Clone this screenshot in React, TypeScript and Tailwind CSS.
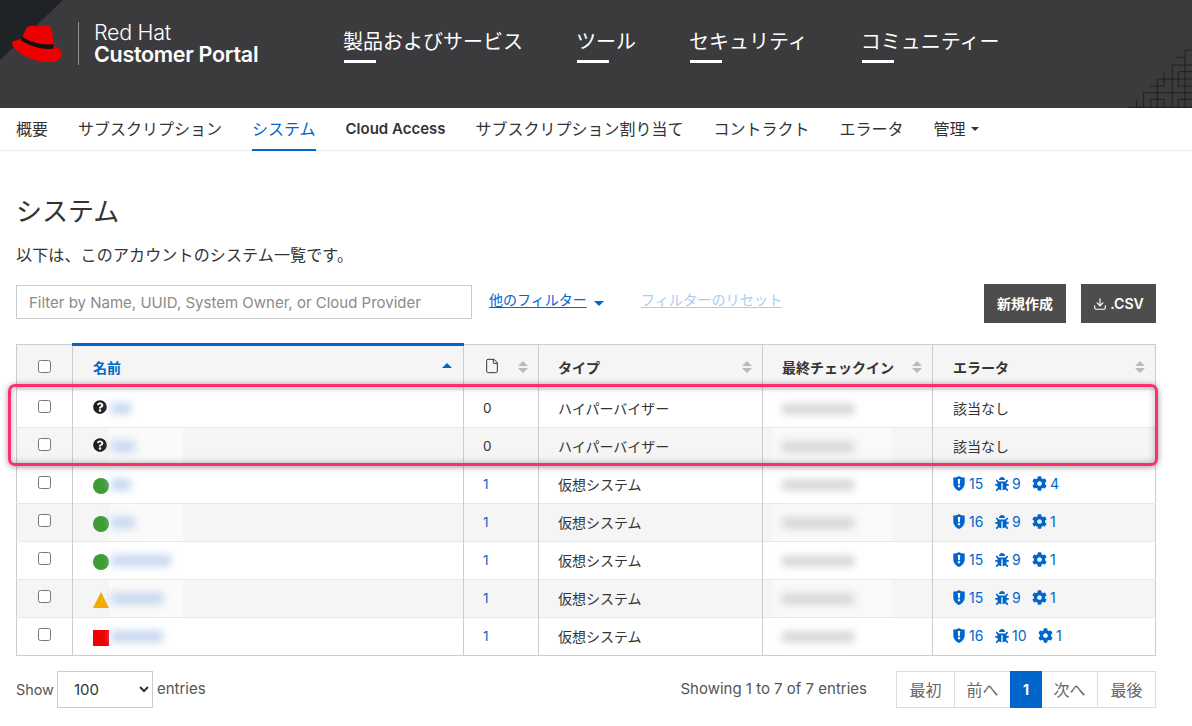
import React from 'react';
import { File, Download } from 'lucide-react';
import { FaBug, FaCog, FaQuestionCircle } from 'react-icons/fa';

const FONT = { fontFamily: '"Inter", "Noto Sans CJK JP", sans-serif' };

const primaryNav = ['製品およびサービス', 'ツール', 'セキュリティ', 'コミュニティー'];
const subNav = ['概要', 'サブスクリプション', 'システム', 'Cloud Access', 'サブスクリプション割り当て', 'コントラクト', 'エラータ'];

interface Row {
  status: 'unknown' | 'ok' | 'warn' | 'error';
  count: number;
  type: string;
  nameWidth: number;
  errata?: [number, number, number];
}

const rows: Row[] = [
  { status: 'unknown', count: 0, type: 'ハイパーバイザー', nameWidth: 20 },
  { status: 'unknown', count: 0, type: 'ハイパーバイザー', nameWidth: 24 },
  { status: 'ok', count: 1, type: '仮想システム', nameWidth: 20, errata: [15, 9, 4] },
  { status: 'ok', count: 1, type: '仮想システム', nameWidth: 24, errata: [16, 9, 1] },
  { status: 'ok', count: 1, type: '仮想システム', nameWidth: 60, errata: [15, 9, 1] },
  { status: 'warn', count: 1, type: '仮想システム', nameWidth: 52, errata: [15, 9, 1] },
  { status: 'error', count: 1, type: '仮想システム', nameWidth: 52, errata: [16, 10, 1] },
];

const SortIcon = () => (
  <svg width="10" height="13" viewBox="0 0 10 13" className="absolute right-[10px] top-1/2 -translate-y-1/2">
    <path d="M0 5.5 L5 0.5 L10 5.5 Z M0 7.5 L5 12.5 L10 7.5 Z" fill="#bbbbbb" />
  </svg>
);

const StatusIcon = ({ status }: { status: Row['status'] }) => {
  if (status === 'unknown') {
    return <FaQuestionCircle className="text-[14px] text-[#1f1f1f] -translate-y-[2px]" />;
  }
  if (status === 'ok') return <span className="block w-4 h-4 rounded-full bg-[#3f9c35] translate-y-[1px]" />;
  if (status === 'warn') {
    return (
      <svg width="16" height="16" viewBox="0 0 16 16" className="translate-y-[1px]">
        <path d="M8 0 L16 16 L0 16 Z" fill="#f0ab00" />
      </svg>
    );
  }
  return <span className="block w-4 h-4 bg-[#ee0000] translate-y-[1px]" />;
};

const ShieldIcon = () => (
  <svg width="12" height="15" viewBox="0 0 12 15">
    <path d="M0.3 1.6 C2.5 1.6 4.5 1 6 0 C7.5 1 9.5 1.6 11.7 1.6 L11.7 7.5 C11.7 11 9 13.5 6 15 C3 13.5 0.3 11 0.3 7.5 Z" fill="#0066cc" />
    <path d="M4.8 3 H7.2 L6.9 8.2 H5.1 Z M4.9 9.2 H7.1 V11.2 H4.9 Z" fill="#ffffff" />
  </svg>
);

const App = () => {
  return (
    <div className="w-[1192px] h-[726px] overflow-hidden bg-white text-[#333333]" style={FONT}>
      {/* masthead */}
      <header className="relative h-[108px] bg-[#3b3b3d] flex overflow-hidden">
        <svg width="64" height="62" viewBox="0 0 64 62" className="absolute left-0 top-0">
          <path d="M0 0 H63 L0 60 Z" fill="#1f2326" />
        </svg>
        <svg width="67" height="63" viewBox="375 135 201 189" className="absolute right-0 bottom-0" fill="none" stroke="#1c1c1e" strokeWidth="2.5">
          <path d="M576 150 H555 V322 M555 172 H530 M576 195 H517 V322 M576 215 H535 V258 H576 M576 237 H472 V322 M450 258 H492 V215 M576 278 H430 V322 M452 322 V298 H492 V322 M410 298 V322 M385 322 H576 M535 322 V298 H576" />
        </svg>
        <div className="relative w-[78px] pl-3 pt-[25px] shrink-0">
          <svg width="51" height="38" viewBox="0 0 51 38">
            <path d="M18 1 C22 0 27 3 31 0.5 C36 -1 39 2 40 6 L42 21 C46 23 50 25 50 29 C50 36 42 37.5 33 37 C22 36 10 31 3 24 C0 21 -1 18 1 16.5 C3 15 7 15.5 10 13 L13 6 C14 3 15 2 18 1 Z" fill="#ee0000" />
            <path d="M10 11.5 C18 17 32 21 41 19 L42 23.5 C31 25.5 16 20.5 9 15.5 Z" fill="#111111" />
          </svg>
        </div>
        <div className="relative w-px h-[43px] mt-[22px] bg-[#8f8f90] shrink-0" />
        <div className="relative ml-[15px] mt-[21px] w-[249px] text-white text-[21.5px] leading-[22px] shrink-0 tracking-[-0.3px]">
          <div className="font-light">Red Hat</div>
          <div className="font-semibold">Customer Portal</div>
        </div>
        <nav className="relative flex gap-[53px] pt-[28px] text-white text-[20px]">
          {primaryNav.map((item) => (
            <div key={item}>
              <div className="leading-[28px] whitespace-nowrap">{item}</div>
              <div className="w-8 h-[3px] bg-white mt-[4px] ml-[1px]" />
            </div>
          ))}
        </nav>
      </header>

      {/* secondary nav */}
      <nav className="h-[43px] border-b border-[#ededed] flex gap-[30px] px-4 text-[16px] text-[#333333]">
        {subNav.map((item) => (
          <div
            key={item}
            className={`h-[43px] leading-[42px] whitespace-nowrap ${
              item === 'システム' ? 'text-[#0066cc] border-b-[2px] border-[#0066cc]' : ''
            } ${item === 'Cloud Access' ? 'font-semibold text-[15px]' : ''}`}
          >
            {item}
          </div>
        ))}
        <div className="h-[42px] leading-[42px] flex items-center gap-[5px] whitespace-nowrap">
          管理
          <svg width="8" height="4" viewBox="0 0 8 4"><path d="M0 0 H8 L4 4 Z" fill="#333333" /></svg>
        </div>
      </nav>

      <main className="pl-4 pr-9">
        <h1 className="text-[26px] leading-[36px] mt-[43px] text-[#333333]">システム</h1>
        <p className="text-[16px] tracking-[0.15px] leading-[24px] mt-[13px] whitespace-nowrap">以下は、このアカウントのシステム一覧です。</p>

        {/* filter bar */}
        <div className="flex items-start mt-[17px] h-[59px]">
          <input
            className="w-[456px] h-[34px] mt-[1px] border border-[#cccccc] px-3 text-[15px] outline-none placeholder:text-[#8a8a8a]"
            placeholder="Filter by Name, UUID, System Owner, or Cloud Provider"
          />
          <a className="ml-[17px] mt-[4px] text-[14px] leading-[24px] text-[#0066cc] underline underline-offset-2 whitespace-nowrap">他のフィルター</a>
          <svg width="10" height="5" viewBox="0 0 10 5" className="ml-[7px] mt-[17px]"><path d="M0 0 H10 L5 5 Z" fill="#0066cc" /></svg>
          <a className="ml-[37px] mt-[4px] text-[14.2px] leading-[24px] text-[#a9cdf0] underline underline-offset-2 whitespace-nowrap">フィルターのリセット</a>
          <div className="ml-auto flex gap-[15px]">
            <button className="w-[82px] h-[39px] bg-[#4d4d4d] text-white text-[14px] font-bold">新規作成</button>
            <button className="w-[75px] h-[39px] bg-[#4d4d4d] text-white text-[14px] font-semibold flex items-center justify-center gap-[3px]">
              <Download size={14} strokeWidth={2} />
              .CSV
            </button>
          </div>
        </div>

        {/* systems table */}
        <div className="relative w-[1140px]">
          <table className="w-[1140px] table-fixed border-collapse border border-[#cccccc] text-[14px]">
            <thead>
              <tr className="h-[45px] bg-[#f5f5f5] font-bold">
                <th className="w-[56px] border-r border-[#cccccc] text-center font-normal">
                  <input type="checkbox" className="block mx-auto -translate-y-[1px]" />
                </th>
                <th className="relative w-[391px] border-r border-[#cccccc] border-t-[3px] border-t-[#0066cc] text-left px-5 text-[#0066cc]">
                  名前
                  <svg width="10" height="5" viewBox="0 0 10 5" className="absolute right-[11px] top-[17px]"><path d="M0 5 L5 0 L10 5 Z" fill="#0066cc" /></svg>
                </th>
                <th className="relative w-[75px] border-r border-[#cccccc] text-left px-5">
                  <File size={16} strokeWidth={1.5} className="-translate-y-[1px]" />
                  <SortIcon />
                </th>
                <th className="relative w-[224px] border-r border-[#cccccc] text-left pl-[19px] pr-5">
                  タイプ
                  <SortIcon />
                </th>
                <th className="relative w-[170px] border-r border-[#cccccc] text-left pl-[19px] whitespace-nowrap">
                  最終チェックイン
                  <SortIcon />
                </th>
                <th className="relative text-left px-5">
                  エラータ
                  <SortIcon />
                </th>
              </tr>
            </thead>
            <tbody>
              {rows.map((row, i) => (
                <tr key={i} className={`h-[38px] border-t border-[#e8e8e8] ${i % 2 === 1 ? 'bg-[#f5f5f5]' : 'bg-white'}`}>
                  <td className="border-r border-[#cccccc]">
                    <input type="checkbox" className="block mx-auto -translate-y-[2px]" />
                  </td>
                  <td className="relative border-r border-[#cccccc] px-5">
                    <StatusIcon status={row.status} />
                    <div className="absolute left-[36px] top-0 bottom-0 w-[74px] bg-white/50">
                      <div
                        className="absolute left-[2px] top-[13px] h-[11px] bg-[#c3d5ee] blur-[4px]"
                        style={{ width: row.nameWidth }}
                      />
                    </div>
                  </td>
                  <td className={`border-r border-[#cccccc] pl-[19px] text-[13.5px] ${row.count > 0 ? 'text-[#0066cc]' : ''}`}>{row.count}</td>
                  <td className="border-r border-[#cccccc] pl-[19px] whitespace-nowrap">{row.type}</td>
                  <td className="relative border-r border-[#cccccc]">
                    <div className="absolute left-[9px] top-0 bottom-0 w-[120px] bg-white/40">
                      <div className="absolute left-[10px] top-[14px] w-[72px] h-[10px] bg-[#d2d2d2] blur-[4px]" />
                    </div>
                  </td>
                  <td className="px-5">
                    {row.errata ? (
                      <div className="flex items-center text-[#0066cc] text-[14px] -translate-y-[1px]">
                        <ShieldIcon />
                        <span className="ml-[4px] w-[22px]">{row.errata[0]}</span>
                        <FaBug className="ml-[4px] text-[14px]" />
                        <span className={`ml-[3px] ${row.errata[1] > 9 ? 'w-[18px]' : 'w-[12px]'}`}>{row.errata[1]}</span>
                        <FaCog className="ml-[8px] text-[15px]" />
                        <span className="ml-[3px]">{row.errata[2]}</span>
                      </div>
                    ) : (
                      '該当なし'
                    )}
                  </td>
                </tr>
              ))}
            </tbody>
          </table>

          {/* annotation box drawn over the screenshot */}
          <div className="absolute -left-2 top-[41px] w-[1150px] h-[82px] border-[3px] border-[#fc2e6c] rounded-[7px] shadow-[0_1px_6px_rgba(0,0,0,0.4),inset_0_0_7px_rgba(0,0,0,0.3)] pointer-events-none" />
        </div>

        {/* footer */}
        <div className="flex items-center mt-[15px] text-[15px] text-[#555555]">
          <span className="text-[14.4px]">Show</span>
          <select className="ml-[3px] w-[96px] h-[37px] border border-[#cccccc] pl-3 bg-white text-[#333333] outline-none" defaultValue="100">
            <option>100</option>
          </select>
          <span className="ml-[4px]">entries</span>
          <span className="ml-auto mr-[29px]">Showing 1 to 7 of 7 entries</span>
          <div className="flex h-[37px] border border-[#dddddd] text-[#666666] text-[16px]">
            <div className="w-[58px] flex items-center justify-center border-r border-[#dddddd]">最初</div>
            <div className="w-[55px] flex items-center justify-center">前へ</div>
            <div className="w-[32px] -my-px flex items-center justify-center bg-[#0066cc] text-white font-bold text-[14px]">1</div>
            <div className="w-[56px] flex items-center justify-center border-r border-[#dddddd]">次へ</div>
            <div className="w-[57px] flex items-center justify-center">最後</div>
          </div>
        </div>
      </main>
    </div>
  );
};

export default App;
